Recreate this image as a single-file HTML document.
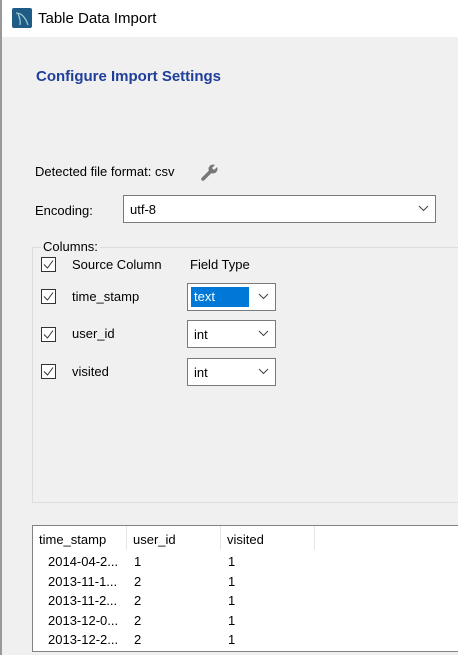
<!DOCTYPE html>
<html><head><style>
body{margin:0;width:458px;height:655px;overflow:hidden;background:#f0f0f0;font-family:"Liberation Sans",sans-serif;font-size:13px;color:#000;position:relative}
.a{position:absolute}
.cb{position:absolute;width:13px;height:13px;border:1px solid #333;background:#fff}
.cb svg{position:absolute;left:1px;top:1px}
.sel{position:absolute;background:#fff;border:1px solid #7a7a7a;box-sizing:border-box}
.chev{position:absolute;right:6px;top:9px}
</style></head><body>
<div class="a" style="left:0;top:0;width:458px;height:37px;background:#fff"></div>
<div class="a" style="left:0;top:0;width:2px;height:655px;background:#999"></div>
<svg class="a" style="left:12px;top:8px" width="20" height="20"><rect width="20" height="20" rx="2" fill="#1f5b87"/><path d="M4 5 Q12 5 16 17 M6 6 Q9 12 8 17" stroke="#9cc" stroke-width="1.3" fill="none"/></svg>
<div class="a" style="left:38px;top:10px;font-size:15px">Table Data Import</div>
<div class="a" style="left:36px;top:68px;font-size:15px;font-weight:bold;color:#1f3f99">Configure Import Settings</div>
<div class="a" style="left:35px;top:164px">Detected file format: csv</div>
<svg class="a" style="left:200px;top:162px" width="20" height="20"><path d="M3 17 L11 9" stroke="#777" stroke-width="3.5" stroke-linecap="round"/><circle cx="13" cy="7" r="4.5" fill="#777"/><path d="M13 7 L18 2" stroke="#f0f0f0" stroke-width="3"/></svg>
<div class="a" style="left:35px;top:203px">Encoding:</div>
<div class="sel" style="left:123px;top:195px;width:313px;height:28px"><span class="a" style="left:6px;top:6px">utf-8</span><svg class="chev" width="11" height="7"><path d="M1 1 L5.5 5.5 L10 1" stroke="#444" fill="none"/></svg></div>
<div class="a" style="left:32px;top:247px;width:440px;height:256px;border:1px solid #dcdcdc;box-sizing:border-box"></div>
<div class="a" style="left:41px;top:239px;background:#f0f0f0;padding:0 2px">Columns:</div>
<div class="cb" style="left:41px;top:257px"><svg width="11" height="11"><path d="M1 5.5 L4.5 9 L10 1.5" stroke="#333" fill="none"/></svg></div>
<div class="a" style="left:72px;top:257px">Source Column</div>
<div class="a" style="left:190px;top:257px">Field Type</div>
<div class="cb" style="left:41px;top:289px"><svg width="11" height="11"><path d="M1 5.5 L4.5 9 L10 1.5" stroke="#333" fill="none"/></svg></div>
<div class="a" style="left:72px;top:289px">time_stamp</div>
<div class="sel" style="left:187px;top:283px;width:89px;height:28px"><span class="a" style="left:3px;top:3px;width:58px;height:20px;background:#0078d7;color:#fff;line-height:20px;padding-left:3px;box-sizing:border-box">text</span><svg class="chev" width="11" height="7"><path d="M1 1 L5.5 5.5 L10 1" stroke="#444" fill="none"/></svg></div>
<div class="cb" style="left:41px;top:327px"><svg width="11" height="11"><path d="M1 5.5 L4.5 9 L10 1.5" stroke="#333" fill="none"/></svg></div>
<div class="a" style="left:72px;top:326px">user_id</div>
<div class="sel" style="left:187px;top:320px;width:89px;height:28px"><span class="a" style="left:6px;top:6px">int</span><svg class="chev" width="11" height="7"><path d="M1 1 L5.5 5.5 L10 1" stroke="#444" fill="none"/></svg></div>
<div class="cb" style="left:41px;top:364px"><svg width="11" height="11"><path d="M1 5.5 L4.5 9 L10 1.5" stroke="#333" fill="none"/></svg></div>
<div class="a" style="left:72px;top:364px">visited</div>
<div class="sel" style="left:187px;top:358px;width:89px;height:28px"><span class="a" style="left:6px;top:6px">int</span><svg class="chev" width="11" height="7"><path d="M1 1 L5.5 5.5 L10 1" stroke="#444" fill="none"/></svg></div>
<div class="a" style="left:32px;top:525px;width:440px;height:127px;background:#fff;border:1px solid #828282;box-sizing:border-box;overflow:hidden">
<div class="a" style="left:93px;top:0;width:1px;height:24px;background:#e5e5e5"></div>
<div class="a" style="left:187px;top:0;width:1px;height:24px;background:#e5e5e5"></div>
<div class="a" style="left:281px;top:0;width:1px;height:24px;background:#e5e5e5"></div>
<div class="a" style="left:6px;top:6px">time_stamp</div><div class="a" style="left:100px;top:6px">user_id</div><div class="a" style="left:194px;top:6px">visited</div>
<div class="a" style="left:15px;top:26px;line-height:19.5px">2014-04-2...<br>2013-11-1...<br>2013-11-2...<br>2013-12-0...<br>2013-12-2...</div>
<div class="a" style="left:101px;top:26px;line-height:19.5px">1<br>2<br>2<br>2<br>2</div>
<div class="a" style="left:195px;top:26px;line-height:19.5px">1<br>1<br>1<br>1<br>1</div>
</div>
</body></html>
